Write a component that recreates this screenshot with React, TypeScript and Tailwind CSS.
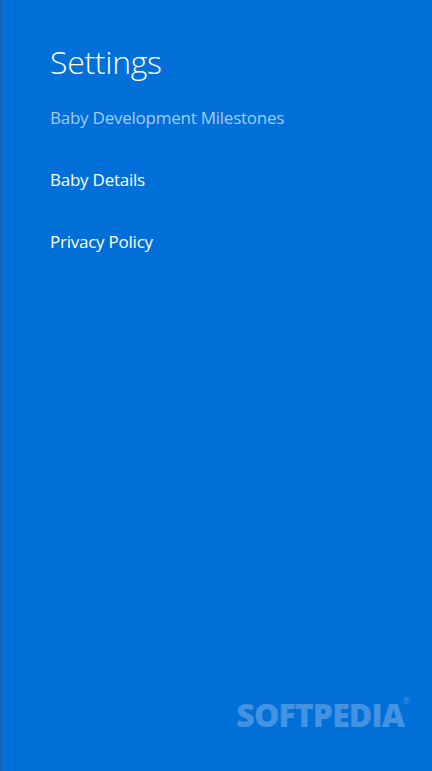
const items = ["Baby Details", "Privacy Policy"];

const App = () => {
  return (
    <div className="flex h-[771px] w-[432px] flex-col border-l border-[#1a5fa8] bg-[#006fd7] pl-[49px] font-['Open_Sans',sans-serif] text-white">
      <h1 className="mt-[40px] text-[32px] font-light leading-[44px] tracking-[-0.3px]">Settings</h1>
      <p className="mt-[21px] text-[17px] leading-[26px] tracking-[-0.24px] text-[#a6cbf0]">Baby Development Milestones</p>
      <div className="mt-[36px] flex flex-col gap-[36px]">
        {items.map((item) => (
          <p key={item} className="text-[17px] leading-[26px] tracking-[-0.24px]">
            {item}
          </p>
        ))}
      </div>
      <div className="mt-auto mb-[39px] mr-[28px] flex justify-end">
        <span className="relative font-['Open_Sans',sans-serif] text-[32px] font-extrabold leading-[34px] tracking-[-0.9px] text-[#4393e3]">
          SOFTPEDIA
          <span className="absolute -right-[6px] -top-[2px] text-[9px] font-normal leading-[10px] tracking-normal">®</span>
        </span>
      </div>
    </div>
  );
};

export default App;
